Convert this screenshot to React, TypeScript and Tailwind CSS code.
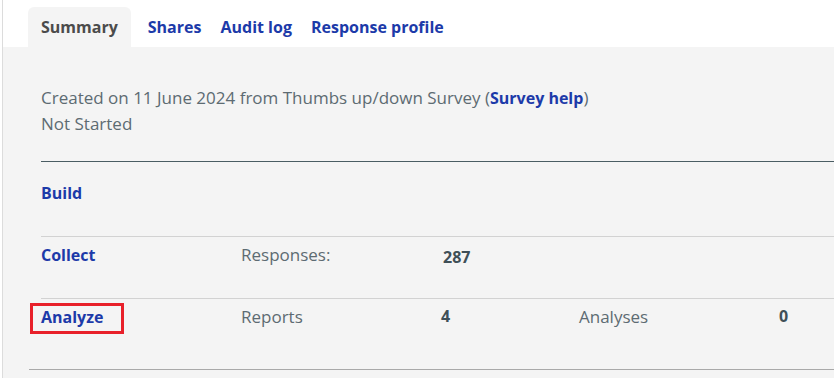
import React from 'react'

// Survey summary page: tabs on top, overview rows below

const font = { fontFamily: '"Open Sans", "Noto Sans", sans-serif' }

const tabs = ['Shares', 'Audit log', 'Response profile']

function Tabs() {
  return (
    <div className="h-[47px] shrink-0 bg-white flex items-end pl-[25px]">
      <div className="h-[40px] px-[13px] flex items-center bg-[#f4f4f4] rounded-t-[6px] text-[16px] font-bold text-[#4b4b4b]">
        Summary
      </div>
      <div className="h-[40px] flex items-center gap-[19px] pl-[17px]">
        {tabs.map((t) => (
          <a key={t} className="text-[16px] font-bold text-[#1c3aa9]">
            {t}
          </a>
        ))}
      </div>
    </div>
  )
}

function Row({
  title,
  cells,
  height,
  pt,
  highlight,
}: {
  title: string
  cells: [string, string, string?][]
  height: string
  pt: string
  highlight?: boolean
}) {
  return (
    <div className={`${height} ${pt} border-t border-[#d2d2d2] grid grid-cols-[200px_200px_138px_200px_200px]`}>
      <div>
        <a className="relative font-bold text-[#1c3aa9] text-[16px]">
          {title}
          {highlight && (
            <span className="absolute left-[-11px] top-[-3px] w-[94px] h-[31px] border-[3px] border-[#e8202a]" />
          )}
        </a>
      </div>
      {cells.flatMap(([label, value, offset]) => [
        <div key={label} className="text-[#5d6b72]">
          {label}
        </div>,
        <div key={label + 'v'} className={`${offset ?? ''} font-bold text-[16px] text-[#3f4f57]`}>
          {value}
        </div>,
      ])}
    </div>
  )
}

export default function App() {
  return (
    <div className="w-[834px] h-[378px] bg-white flex overflow-hidden" style={font}>
      <div className="w-[2px] shrink-0" />
      <div className="flex-1 flex flex-col border-l border-[#dcdcdc] min-w-0">
        <Tabs />
        <div className="flex-1 bg-[#f4f4f4] pt-[38px] text-[17px] leading-[25px]">
          <div className="pl-[38px]">
            <p className="text-[#5d6b72]">
              Created on 11 June 2024 from Thumbs up/down Survey (
              <a className="font-bold text-[#1c3aa9] text-[16px]">Survey help</a>)
            </p>
            <p className="text-[#5d6b72]">Not Started</p>
            <div className="mt-[25px] border-t border-[#4a5d63]" />
            <div className="h-[74px] pt-[18px]">
              <a className="font-bold text-[#1c3aa9] text-[16px]">Build</a>
            </div>
            <Row
              title="Collect"
              cells={[['Responses:', '287', 'pt-[3px] pl-[2px]']]}
              height="h-[62px]"
              pt="pt-[5px]"
            />
            <Row
              title="Analyze"
              cells={[
                ['Reports', '4'],
                ['Analyses', '0'],
              ]}
              height="h-[71px]"
              pt="pt-[5px]"
              highlight
            />
          </div>
          <div className="ml-[26px] border-t border-[#a9a9a9]" />
        </div>
      </div>
    </div>
  )
}
